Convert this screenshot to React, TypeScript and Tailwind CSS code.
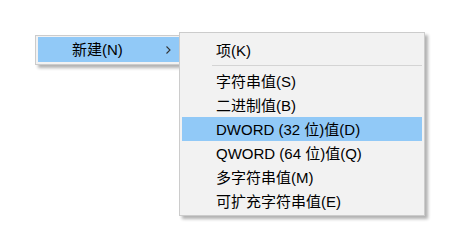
import React from "react";

const font = { fontFamily: '"Liberation Sans", "Noto Sans CJK SC", sans-serif' };

function Row({ label, active }: { label: string; active?: boolean }) {
  return (
    <div
      className={`h-[24px] flex items-center pl-[34px] text-[15px] leading-none text-black ${
        active ? "bg-[#91c9f7]" : ""
      }`}
    >
      {label}
    </div>
  );
}

export default function App() {
  return (
    <div className="relative w-[467px] h-[252px] bg-white overflow-hidden" style={font}>
      {/* parent menu */}
      <div className="absolute left-[35px] top-[35px] w-[147px] border border-[#cccccc] bg-[#f2f2f2] pt-[1px] pb-[2px] px-[2px] shadow-[3px_3px_3px_rgba(0,0,0,0.3)]">
        <div className="h-[25px] flex items-center bg-[#91c9f7] pl-[34px] pr-[8px] text-[15px] leading-none text-black">
          <span>新建(N)</span>
          <svg className="ml-auto" width="5" height="8" viewBox="0 0 5 8">
            <polyline points="0.5,0.5 4,4 0.5,7.5" fill="none" stroke="#333" strokeWidth="1.1" />
          </svg>
        </div>
      </div>
      {/* submenu */}
      <div className="absolute left-[179px] top-[32px] w-[246px] border border-[#cccccc] bg-[#f2f2f2] pt-[5px] pb-[2px] px-[2px] shadow-[3px_3px_3px_rgba(0,0,0,0.3)]">
        <Row label="项(K)" />
        <div className="h-[7px] flex items-center pl-[30px]">
          <div className="h-[1px] w-full bg-[#d4d4d4]" />
        </div>
        <Row label="字符串值(S)" />
        <Row label="二进制值(B)" />
        <Row label="DWORD (32 位)值(D)" active />
        <Row label="QWORD (64 位)值(Q)" />
        <Row label="多字符串值(M)" />
        <Row label="可扩充字符串值(E)" />
      </div>
    </div>
  );
}
